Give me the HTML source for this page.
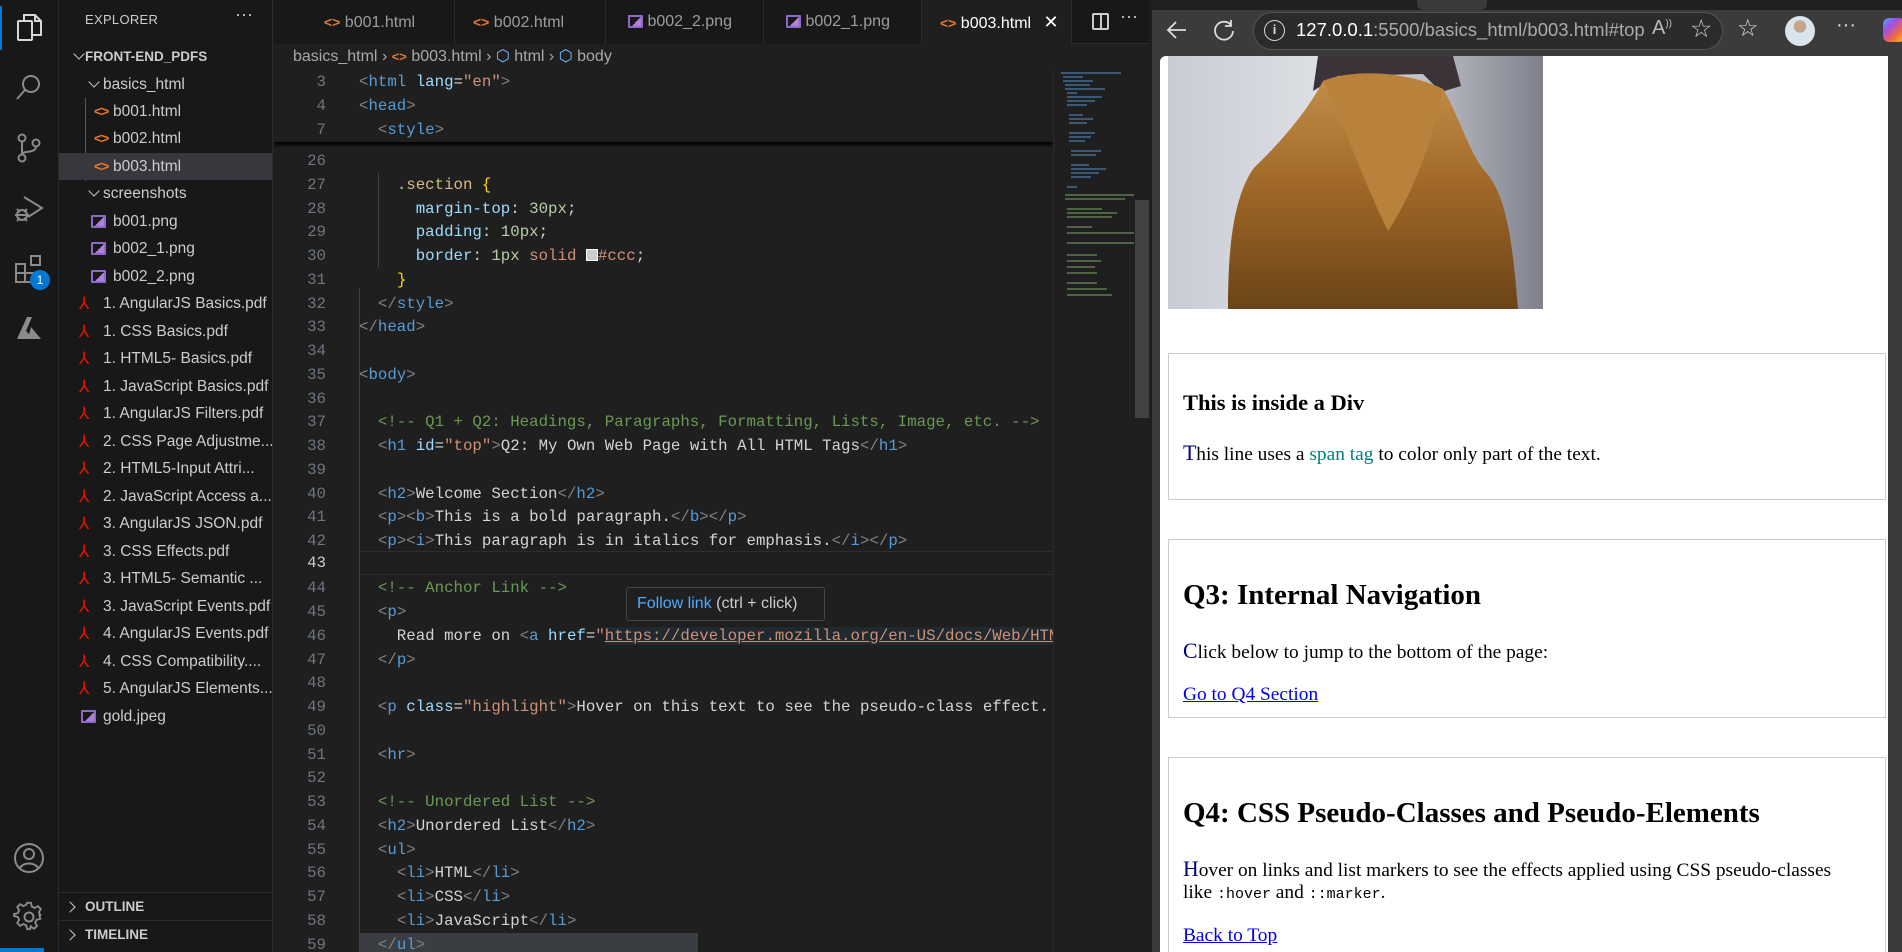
<!DOCTYPE html>
<html><head><meta charset="utf-8">
<style>
*{box-sizing:border-box;margin:0;padding:0}
body{width:1902px;height:952px;overflow:hidden;background:#1f1f1f;font-family:"Liberation Sans",sans-serif;position:relative}
.abs{position:absolute}
#act{left:0;top:0;width:59px;height:952px;background:#181818;border-right:1px solid #2b2b2b}
#side{left:59px;top:0;width:214px;height:952px;background:#181818;border-right:1px solid #2b2b2b;color:#cccccc;font-size:15.5px}
.row{position:absolute;left:0;width:213px;height:27px;line-height:27px;white-space:nowrap;overflow:hidden}
.chev{display:inline-block;width:8px;height:8px;border-right:1.6px solid #ccc;border-bottom:1.6px solid #ccc;transform:rotate(45deg);position:absolute;top:7px}
.chevr{transform:rotate(-45deg)}
.hic{position:absolute;top:0;color:#e37933;font-size:14px;font-weight:bold;letter-spacing:-1px}
.pic{position:absolute;top:7px;width:15px;height:13px;border:2px solid #8c6bc8;border-radius:1px;background:linear-gradient(135deg,transparent 55%,#b180d7 55%)}
.pdf{position:absolute;top:0;color:#e51400;font-size:17px}
#tabs{left:274px;top:0;width:876px;height:44px;background:#181818;border-bottom:1px solid #2b2b2b}
.tab{position:absolute;top:0;height:44px;line-height:44px;color:#9d9d9d;font-size:16px;border-right:1px solid #2b2b2b;background:#181818;white-space:nowrap}
#crumb{left:274px;top:44px;width:780px;height:26px;line-height:26px;color:#a9a9a9;font-size:16px;background:#1f1f1f}
#code{left:274px;top:68px;width:779px;height:884px;overflow:hidden;font-family:"Liberation Mono",monospace;font-size:15.75px;color:#d4d4d4}
.ln{position:absolute;left:0;width:52px;text-align:right;color:#6e7681;height:24px;line-height:24px}
.cl{position:absolute;left:85px;white-space:pre;height:24px;line-height:24px}
.t{color:#569cd6}.b{color:#808080}.a{color:#9cdcfe}.s{color:#ce9178}.c{color:#6a9955}.n{color:#b5cea8}.y{color:#ffd700}.sel{color:#d7ba7d}
#browser{left:1152px;top:0;width:750px;height:952px;background:#3b3b3b}
#page{left:1160px;top:56px;width:728px;height:896px;background:#fff;font-family:"Liberation Serif",serif;color:#000;border-top-left-radius:6px;overflow:hidden}
.box{position:absolute;left:8px;width:718px;border:1px solid #ccc}
.fl{color:navy;font-size:1.12em}
.p{position:absolute;left:23px;font-size:19.4px;white-space:nowrap}
a{color:#0000ee;text-decoration:underline}
</style></head><body>

<div id="act" class="abs">
<div class="abs" style="left:0;top:6px;width:2px;height:44px;background:#0078d4"></div>
<svg class="abs" style="left:13px;top:11px" width="32" height="32" viewBox="0 0 32 32" fill="none" stroke="#d7d7d7" stroke-width="2"><rect x="5" y="10" width="14" height="19" rx="1"/><path d="M11 10V4h11l6 6v14H19"/><path d="M22 4v6h6"/></svg>
<svg class="abs" style="left:14px;top:72px" width="30" height="30" viewBox="0 0 30 30" fill="none" stroke="#8b8b8b" stroke-width="2"><circle cx="17" cy="12" r="8"/><path d="M11 18L3 27"/></svg>
<svg class="abs" style="left:14px;top:132px" width="30" height="32" viewBox="0 0 30 32" fill="none" stroke="#8b8b8b" stroke-width="2"><circle cx="8" cy="6" r="3.5"/><circle cx="8" cy="26" r="3.5"/><circle cx="22" cy="11" r="3.5"/><path d="M8 10v12M22 15c0 6-14 4-14 7"/></svg>
<svg class="abs" style="left:12px;top:193px" width="34" height="32" viewBox="0 0 34 32" fill="none" stroke="#8b8b8b" stroke-width="2"><path d="M12 4l18 11-14 9"/><circle cx="10" cy="22" r="5"/><path d="M3 22h14M5 16l3 3M15 16l-3 3M5 28l3-3M15 28l-3-3"/></svg>
<svg class="abs" style="left:13px;top:253px" width="34" height="34" viewBox="0 0 34 34" fill="none" stroke="#8b8b8b" stroke-width="2"><rect x="3" y="11" width="9" height="9"/><rect x="3" y="20" width="9" height="9"/><rect x="12" y="20" width="9" height="9"/><rect x="18" y="3" width="9" height="9"/></svg>
<div class="abs" style="left:30px;top:270px;width:20px;height:20px;border-radius:50%;background:#0078d4;color:#fff;font-size:12px;text-align:center;line-height:20px">1</div>
<svg class="abs" style="left:15px;top:315px" width="28" height="26" viewBox="0 0 28 26"><path d="M2 24L12 2h5l-6 14 8 8z" fill="#8b8b8b"/><path d="M16 12l10 12H13z" fill="#8b8b8b"/></svg>
<svg class="abs" style="left:13px;top:842px" width="32" height="32" viewBox="0 0 32 32" fill="none" stroke="#8b8b8b" stroke-width="2"><circle cx="16" cy="16" r="14"/><circle cx="16" cy="12" r="5"/><path d="M7 26c3-6 15-6 18 0"/></svg>
<svg class="abs" style="left:13px;top:901px" width="32" height="32" viewBox="0 0 32 32" fill="none" stroke="#8b8b8b" stroke-width="2"><circle cx="16" cy="16" r="4.5"/><path d="M14 3h4l1 4 3 1.5 3.5-2 3 3-2 3.5L28 16l-1 .2 1 3.8-4 1-1.5 3 2 3.5-3 3-3.5-2L18 27l-1 4h-3l-1-4-3-1.5-3.5 2-3-3 2-3.5L4 18l-4-1v-2l4-1 1.5-3-2-3.5 3-3 3.5 2L13 5z" transform="translate(1 -1) scale(.94)"/></svg>
<div class="abs" style="left:0;top:948px;width:44px;height:4px;background:#0078d4"></div>
</div>

<div id="side" class="abs">
<div class="abs" style="left:26px;top:12px;font-size:13px;letter-spacing:.3px">EXPLORER</div>
<div class="abs" style="left:176px;top:4px;font-size:18px">···</div>
<div class="row" style="top:43px"><span class="chev" style="left:16px"></span><b style="position:absolute;left:26px;font-size:13.5px">FRONT-END_PDFS</b></div>
<div class="row" style="top:71px"><span class="chev" style="left:31px"></span><span style="position:absolute;left:44px">basics_html</span></div>
<div class="abs" style="left:26px;top:98px;width:1px;height:83px;background:#585858"></div>
<div class="row" style="top:98px"><span class="hic" style="left:35px">&lt;&gt;</span><span style="position:absolute;left:54px">b001.html</span></div>
<div class="row" style="top:125px"><span class="hic" style="left:35px">&lt;&gt;</span><span style="position:absolute;left:54px">b002.html</span></div>
<div class="row" style="top:153px;background:#37373d"><span class="hic" style="left:35px">&lt;&gt;</span><span style="position:absolute;left:54px">b003.html</span></div>
<div class="row" style="top:180px"><span class="chev" style="left:31px"></span><span style="position:absolute;left:44px">screenshots</span></div>
<div class="row" style="top:208px"><span class="pic" style="left:32px"></span><span style="position:absolute;left:54px">b001.png</span></div>
<div class="row" style="top:235px"><span class="pic" style="left:32px"></span><span style="position:absolute;left:54px">b002_1.png</span></div>
<div class="row" style="top:263px"><span class="pic" style="left:32px"></span><span style="position:absolute;left:54px">b002_2.png</span></div>
<div class="row" style="top:290px"><span class="pdf" style="left:20px">⅄</span><span style="position:absolute;left:44px">1. AngularJS Basics.pdf</span></div>
<div class="row" style="top:318px"><span class="pdf" style="left:20px">⅄</span><span style="position:absolute;left:44px">1. CSS Basics.pdf</span></div>
<div class="row" style="top:345px"><span class="pdf" style="left:20px">⅄</span><span style="position:absolute;left:44px">1. HTML5- Basics.pdf</span></div>
<div class="row" style="top:373px"><span class="pdf" style="left:20px">⅄</span><span style="position:absolute;left:44px">1. JavaScript Basics.pdf</span></div>
<div class="row" style="top:400px"><span class="pdf" style="left:20px">⅄</span><span style="position:absolute;left:44px">1. AngularJS Filters.pdf</span></div>
<div class="row" style="top:428px"><span class="pdf" style="left:20px">⅄</span><span style="position:absolute;left:44px">2. CSS Page Adjustme...</span></div>
<div class="row" style="top:455px"><span class="pdf" style="left:20px">⅄</span><span style="position:absolute;left:44px">2. HTML5-Input Attri...</span></div>
<div class="row" style="top:483px"><span class="pdf" style="left:20px">⅄</span><span style="position:absolute;left:44px">2. JavaScript Access a...</span></div>
<div class="row" style="top:510px"><span class="pdf" style="left:20px">⅄</span><span style="position:absolute;left:44px">3. AngularJS JSON.pdf</span></div>
<div class="row" style="top:538px"><span class="pdf" style="left:20px">⅄</span><span style="position:absolute;left:44px">3. CSS Effects.pdf</span></div>
<div class="row" style="top:565px"><span class="pdf" style="left:20px">⅄</span><span style="position:absolute;left:44px">3. HTML5- Semantic ...</span></div>
<div class="row" style="top:593px"><span class="pdf" style="left:20px">⅄</span><span style="position:absolute;left:44px">3. JavaScript Events.pdf</span></div>
<div class="row" style="top:620px"><span class="pdf" style="left:20px">⅄</span><span style="position:absolute;left:44px">4. AngularJS Events.pdf</span></div>
<div class="row" style="top:648px"><span class="pdf" style="left:20px">⅄</span><span style="position:absolute;left:44px">4. CSS Compatibility....</span></div>
<div class="row" style="top:675px"><span class="pdf" style="left:20px">⅄</span><span style="position:absolute;left:44px">5. AngularJS Elements...</span></div>
<div class="row" style="top:703px"><span class="pic" style="left:22px"></span><span style="position:absolute;left:44px">gold.jpeg</span></div>
<div class="abs" style="left:0;top:892px;width:213px;height:1px;background:#2b2b2b"></div>
<div class="row" style="top:893px"><span class="chev chevr" style="left:7px;top:10px"></span><b style="position:absolute;left:26px;font-size:13.5px">OUTLINE</b></div>
<div class="abs" style="left:0;top:920px;width:213px;height:1px;background:#2b2b2b"></div>
<div class="row" style="top:921px"><span class="chev chevr" style="left:7px;top:10px"></span><b style="position:absolute;left:26px;font-size:13.5px">TIMELINE</b></div>
</div>

<div id="tabs" class="abs">
<div class="tab" style="left:0;width:181px"><span style="color:#e37933;font-weight:bold;margin-left:50px;font-size:14px">&lt;&gt;</span> b001.html</div>
<div class="tab" style="left:181px;width:151px"><span style="color:#e37933;font-weight:bold;margin-left:18px;font-size:14px">&lt;&gt;</span> b002.html</div>
<div class="tab" style="left:332px;width:158px"><span class="pic" style="position:relative;display:inline-block;top:2px;margin-left:22px"></span> b002_2.png</div>
<div class="tab" style="left:490px;width:158px"><span class="pic" style="position:relative;display:inline-block;top:2px;margin-left:22px"></span> b002_1.png</div>
<div class="tab" style="left:648px;width:150px;background:#1f1f1f;color:#fff;height:45px"><span style="color:#e37933;font-weight:bold;margin-left:18px;font-size:14px">&lt;&gt;</span> b003.html <span style="margin-left:8px;font-size:18px">✕</span></div>
<div class="abs" style="left:818px;top:13px;width:17px;height:17px;border:2px solid #ccc;border-radius:2px"><div style="position:absolute;left:6px;top:0;width:2px;height:13px;background:#ccc"></div></div>
<div class="abs" style="left:846px;top:6px;color:#ccc;font-size:18px">···</div>
</div>

<div id="crumb" class="abs"><span style="margin-left:19px">basics_html</span> <span>›</span> <span style="color:#e37933;font-weight:bold;font-size:13px">&lt;&gt;</span> b003.html › <span style="color:#75beff">⬡</span> html › <span style="color:#75beff">⬡</span> body</div>

<div id="code" class="abs">
<div class="ln" style="top:81px">26</div>
<div class="ln" style="top:105px">27</div><div class="cl" style="top:105px">    <span class="sel">.section</span> <span class="y">{</span></div>
<div class="ln" style="top:129px">28</div><div class="cl" style="top:129px">      <span class="a">margin-top</span>: <span class="n">30px</span>;</div>
<div class="ln" style="top:152px">29</div><div class="cl" style="top:152px">      <span class="a">padding</span>: <span class="n">10px</span>;</div>
<div class="ln" style="top:176px">30</div><div class="cl" style="top:176px">      <span class="a">border</span>: <span class="n">1px</span> <span class="s">solid</span> <span style="display:inline-block;width:12px;height:12px;background:#ccc;border:1px solid #fff;vertical-align:-1px"></span><span class="s">#ccc</span>;</div>
<div class="ln" style="top:200px">31</div><div class="cl" style="top:200px">    <span class="y">}</span></div>
<div class="ln" style="top:224px">32</div><div class="cl" style="top:224px">  <span class="b">&lt;/</span><span class="t">style</span><span class="b">&gt;</span></div>
<div class="ln" style="top:247px">33</div><div class="cl" style="top:247px"><span class="b">&lt;/</span><span class="t">head</span><span class="b">&gt;</span></div>
<div class="ln" style="top:271px">34</div>
<div class="ln" style="top:295px">35</div><div class="cl" style="top:295px"><span class="b">&lt;</span><span class="t">body</span><span class="b">&gt;</span></div>
<div class="ln" style="top:319px">36</div>
<div class="ln" style="top:342px">37</div><div class="cl c" style="top:342px">  &lt;!-- Q1 + Q2: Headings, Paragraphs, Formatting, Lists, Image, etc. --&gt;</div>
<div class="ln" style="top:366px">38</div><div class="cl" style="top:366px">  <span class="b">&lt;</span><span class="t">h1</span> <span class="a">id</span>=<span class="s">"top"</span><span class="b">&gt;</span>Q2: My Own Web Page with All HTML Tags<span class="b">&lt;/</span><span class="t">h1</span><span class="b">&gt;</span></div>
<div class="ln" style="top:390px">39</div>
<div class="ln" style="top:414px">40</div><div class="cl" style="top:414px">  <span class="b">&lt;</span><span class="t">h2</span><span class="b">&gt;</span>Welcome Section<span class="b">&lt;/</span><span class="t">h2</span><span class="b">&gt;</span></div>
<div class="ln" style="top:437px">41</div><div class="cl" style="top:437px">  <span class="b">&lt;</span><span class="t">p</span><span class="b">&gt;&lt;</span><span class="t">b</span><span class="b">&gt;</span>This is a bold paragraph.<span class="b">&lt;/</span><span class="t">b</span><span class="b">&gt;&lt;/</span><span class="t">p</span><span class="b">&gt;</span></div>
<div class="ln" style="top:461px">42</div><div class="cl" style="top:461px">  <span class="b">&lt;</span><span class="t">p</span><span class="b">&gt;&lt;</span><span class="t">i</span><span class="b">&gt;</span>This paragraph is in italics for emphasis.<span class="b">&lt;/</span><span class="t">i</span><span class="b">&gt;&lt;/</span><span class="t">p</span><span class="b">&gt;</span></div>
<div class="abs" style="left:84px;top:483px;width:700px;height:24px;border-top:1px solid #2d2d2d;border-bottom:1px solid #2d2d2d"></div>
<div class="ln" style="top:483px;color:#ccc">43</div>
<div class="ln" style="top:508px">44</div><div class="cl c" style="top:508px">  &lt;!-- Anchor Link --&gt;</div>
<div class="ln" style="top:532px">45</div><div class="cl" style="top:532px">  <span class="b">&lt;</span><span class="t">p</span><span class="b">&gt;</span></div>
<div class="ln" style="top:556px">46</div><div class="cl" style="top:556px">    Read more on <span class="b">&lt;</span><span class="t">a</span> <span class="a">href</span>=<span class="s">"<span style="text-decoration:underline;background:#264f7833">https://developer.mozilla.org/en-US/docs/Web/HTML</span>"</span></div>
<div class="ln" style="top:580px">47</div><div class="cl" style="top:580px">  <span class="b">&lt;/</span><span class="t">p</span><span class="b">&gt;</span></div>
<div class="ln" style="top:603px">48</div>
<div class="ln" style="top:627px">49</div><div class="cl" style="top:627px">  <span class="b">&lt;</span><span class="t">p</span> <span class="a">class</span>=<span class="s">"highlight"</span><span class="b">&gt;</span>Hover on this text to see the pseudo-class effect.</div>
<div class="ln" style="top:651px">50</div>
<div class="ln" style="top:675px">51</div><div class="cl" style="top:675px">  <span class="b">&lt;</span><span class="t">hr</span><span class="b">&gt;</span></div>
<div class="ln" style="top:698px">52</div>
<div class="ln" style="top:722px">53</div><div class="cl c" style="top:722px">  &lt;!-- Unordered List --&gt;</div>
<div class="ln" style="top:746px">54</div><div class="cl" style="top:746px">  <span class="b">&lt;</span><span class="t">h2</span><span class="b">&gt;</span>Unordered List<span class="b">&lt;/</span><span class="t">h2</span><span class="b">&gt;</span></div>
<div class="ln" style="top:770px">55</div><div class="cl" style="top:770px">  <span class="b">&lt;</span><span class="t">ul</span><span class="b">&gt;</span></div>
<div class="ln" style="top:793px">56</div><div class="cl" style="top:793px">    <span class="b">&lt;</span><span class="t">li</span><span class="b">&gt;</span>HTML<span class="b">&lt;/</span><span class="t">li</span><span class="b">&gt;</span></div>
<div class="ln" style="top:817px">57</div><div class="cl" style="top:817px">    <span class="b">&lt;</span><span class="t">li</span><span class="b">&gt;</span>CSS<span class="b">&lt;/</span><span class="t">li</span><span class="b">&gt;</span></div>
<div class="ln" style="top:841px">58</div><div class="cl" style="top:841px">    <span class="b">&lt;</span><span class="t">li</span><span class="b">&gt;</span>JavaScript<span class="b">&lt;/</span><span class="t">li</span><span class="b">&gt;</span></div>
<div class="abs" style="left:85px;top:865px;width:339px;height:19px;background:#3a3d41"></div>
<div class="ln" style="top:865px">59</div><div class="cl" style="top:865px">  <span class="b">&lt;/</span><span class="t">ul</span><span class="b">&gt;</span></div>
<div class="abs" style="left:85px;top:220px;width:1px;height:664px;background:#404040"></div>
<div class="abs" style="left:104px;top:105px;width:1px;height:95px;background:#404040"></div>
<div class="abs" style="left:0;top:0;width:779px;height:74px;background:#1f1f1f;box-shadow:0 3px 4px #000"></div>
<div class="ln" style="top:2px">3</div><div class="cl" style="top:2px"><span class="b">&lt;</span><span class="t">html</span> <span class="a">lang</span>=<span class="s">"en"</span><span class="b">&gt;</span></div>
<div class="ln" style="top:26px">4</div><div class="cl" style="top:26px"><span class="b">&lt;</span><span class="t">head</span><span class="b">&gt;</span></div>
<div class="ln" style="top:50px">7</div><div class="cl" style="top:50px">  <span class="b">&lt;</span><span class="t">style</span><span class="b">&gt;</span></div>
<div class="abs" style="left:352px;top:519px;width:199px;height:34px;background:#202020;border:1px solid #454545;border-radius:3px;font-family:'Liberation Sans',sans-serif;font-size:16px;line-height:32px;padding-left:10px;color:#ccc;white-space:nowrap"><span style="color:#4daafc">Follow link</span> (ctrl + click)</div>
</div>

<div class="abs" style="left:1053px;top:70px;width:81px;height:882px;background:#1f1f1f;border-left:1px solid #2a2a2a">
<svg width="81" height="240" style="position:absolute;top:0;left:4px">
<g stroke-width="1.2">
<path d="M3 3h60M5 7h20M5 11h30M7 15h25M7 19h40M9 23h10M9 27h35M9 31h28M9 35h20M11 45h14M11 49h24M11 53h18M11 63h26M11 67h22M11 71h16M13 81h30M13 85h25M13 95h18M13 99h35M13 103h28M13 107h20M9 117h10" stroke="#4e7aa6"/>
<path d="M7 125h70M7 129h60M9 139h35M9 143h50M9 147h45M9 157h25M9 163h75M9 173h70M9 185h30M9 191h34M9 197h28M9 203h30M9 213h30M9 219h40M9 225h45" stroke="#6a8a5a"/>
</g></svg>
</div>
<div class="abs" style="left:1134px;top:70px;width:16px;height:882px;background:#1f1f1f"></div>
<div class="abs" style="left:1135px;top:200px;width:14px;height:218px;background:#424242"></div>

<div id="browser" class="abs">
<div class="abs" style="left:0;top:0;width:750px;height:10px;background:#202020"></div>
<div class="abs" style="left:265px;top:0;width:70px;height:10px;background:#3b3b3b;border-radius:0 0 6px 6px"></div>
<svg class="abs" style="left:14px;top:19px" width="22" height="22" viewBox="0 0 22 22" fill="none" stroke="#ddd" stroke-width="1.8"><path d="M20 11H3M10 3l-8 8 8 8"/></svg>
<svg class="abs" style="left:60px;top:18px" width="24" height="24" viewBox="0 0 24 24" fill="none" stroke="#ddd" stroke-width="1.8"><path d="M19 7A9 9 0 1 0 21 13"/><path d="M19 2v6h-6"/></svg>
<div class="abs" style="left:101px;top:12px;width:470px;height:38px;border-radius:19px;background:#2b2b2b;border:1px solid #555"></div>
<div class="abs" style="left:112px;top:20px;width:21px;height:21px;border:1.8px solid #ddd;border-radius:50%;color:#ddd;font-size:13px;text-align:center;line-height:18px;font-weight:bold">i</div>
<div class="abs" style="left:144px;top:19px;font-size:18.5px;color:#aaa;white-space:nowrap"><span style="color:#fff">127.0.0.1</span>:5500/basics_html/b003.html#top</div>
<div class="abs" style="left:500px;top:17px;font-size:20px;color:#bbb">A<sup style="font-size:10px">))</sup></div>
<div class="abs" style="left:538px;top:14px;font-size:25px;color:#ccc">☆</div>
<div class="abs" style="left:585px;top:14px;font-size:24px;color:#ddd">☆</div>
<div class="abs" style="left:633px;top:16px;width:30px;height:30px;border-radius:50%;background:radial-gradient(circle at 50% 35%,#c7a58a 0 25%,#d8e4ee 26%)"></div>
<div class="abs" style="left:684px;top:14px;font-size:20px;color:#ddd">···</div>
<div class="abs" style="left:731px;top:18px;width:22px;height:24px;border-radius:6px;background:linear-gradient(135deg,#3fa5ff,#a74ce0,#f06b3c,#f4c430)"></div>
<div class="abs" style="left:738px;top:50px;width:12px;height:902px;background:#3b3b3b"></div>
</div>

<div id="page" class="abs">
<svg class="abs" style="left:8px;top:0" width="375" height="253" viewBox="0 0 375 253">
<defs>
<linearGradient id="bg" x1="0" x2="1"><stop offset="0" stop-color="#c9ccd3"/><stop offset=".5" stop-color="#e2e4e9"/><stop offset="1" stop-color="#7f808c"/></linearGradient>
<linearGradient id="jk" x1="0" y1="0" x2="0" y2="1"><stop offset="0" stop-color="#c4904a"/><stop offset=".5" stop-color="#9e6626"/><stop offset="1" stop-color="#6a4418"/></linearGradient>
</defs>
<rect width="375" height="253" fill="url(#bg)"/>
<path d="M150 0h135l8 30-20 6L255 18 170 20 145 35z" fill="#3b3338"/>
<path d="M155 25c30-12 85-10 120 8 15 25 25 60 40 80 25 25 30 80 35 140H60c0-60 5-110 25-140 20-20 50-50 70-88z" fill="url(#jk)"/>
<path d="M155 25c20 40 40 100 65 150 30-45 50-110 55-142-40-18-90-20-120-8z" fill="#b8823c"/>
</svg>
<div class="box" style="top:297px;height:147px">
<div class="p" style="top:36px;font-size:22.5px;font-weight:bold;left:14px">This is inside a Div</div>
<div class="p" style="top:87px;left:14px"><span class="fl">T</span>his line uses a <span style="color:#008080">span tag</span> to color only part of the text.</div>
</div>
<div class="box" style="top:483px;height:179px">
<div class="p" style="top:39px;font-size:29px;font-weight:bold;left:14px">Q3: Internal Navigation</div>
<div class="p" style="top:99px;left:14px"><span class="fl">C</span>lick below to jump to the bottom of the page:</div>
<div class="p" style="top:144px;left:14px"><a>Go to Q4 Section</a></div>
</div>
<div class="box" style="top:701px;height:220px">
<div class="p" style="top:39px;font-size:29px;font-weight:bold;left:14px">Q4: CSS Pseudo-Classes and Pseudo-Elements</div>
<div class="p" style="top:99px;left:14px"><span class="fl">H</span>over on links and list markers to see the effects applied using CSS pseudo-classes</div>
<div class="p" style="top:124px;left:14px">like <span style="font-family:'Liberation Mono',monospace;font-size:15px">:hover</span> and <span style="font-family:'Liberation Mono',monospace;font-size:15px">::marker</span>.</div>
<div class="p" style="top:167px;left:14px"><a>Back to Top</a></div>
</div>
</div>
</body></html>
